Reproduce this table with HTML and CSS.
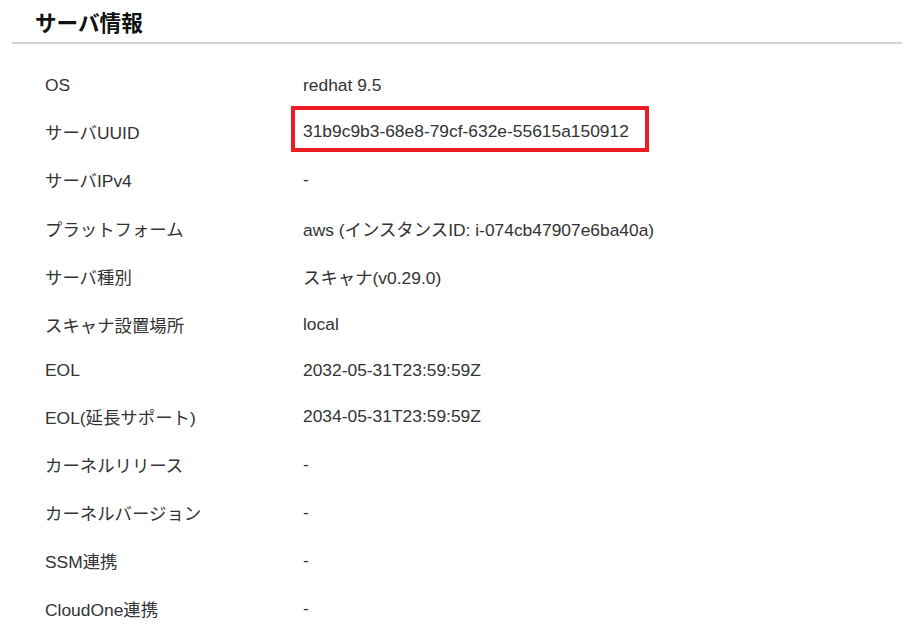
FILE: index.html
```html
<!DOCTYPE html>
<html lang="ja">
<head>
  <meta charset="UTF-8" />
  <title>サーバ情報</title>
  <link rel="stylesheet" href="styles.css">
</head>
<body>

  <div class="server_info">
    <h2 class="section_title">サーバ情報</h2>

    <table class="info_table">
      <tr><th>OS</th><td>redhat 9.5</td></tr>
      <tr><th>サーバUUID</th><td><span class="highlight">31b9c9b3-68e8-79cf-632e-55615a150912</span></td></tr>
      <tr><th>サーバIPv4</th><td>-</td></tr>
      <tr><th>プラットフォーム</th><td>aws (インスタンスID: i-074cb47907e6ba40a)</td></tr>
      <tr><th>サーバ種別</th><td>スキャナ(v0.29.0)</td></tr>
      <tr><th>スキャナ設置場所</th><td>local</td></tr>
      <tr><th>EOL</th><td>2032-05-31T23:59:59Z</td></tr>
      <tr><th>EOL(延長サポート)</th><td>2034-05-31T23:59:59Z</td></tr>
      <tr><th>カーネルリリース</th><td>-</td></tr>
      <tr><th>カーネルバージョン</th><td>-</td></tr>
      <tr><th>SSM連携</th><td>-</td></tr>
      <tr><th>CloudOne連携</th><td>-</td></tr>
    </table>
  </div>

</body>
</html>
```

FILE: styles.css
```css
body {
  margin: 0;
  padding: 0;
  background-color: #fff;
  color: #333;
  font-family: "Liberation Sans", Arial, "Noto Sans CJK JP", sans-serif;
}

.server_info {
  margin: 0 14px 0 12px;
}

.section_title {
  margin: 0;
  padding: 6px 0 5px 23px;
  font-size: 21.6px;
  font-weight: bold;
  color: #111;
  border-bottom: 2px solid #d3d3d3;
}

.info_table {
  margin: 20px 0 0 33px;
  border-collapse: collapse;
  font-size: 17.4px;
}

.info_table th,
.info_table td {
  padding: 11.3px 0 11.8px 0;
  text-align: left;
  font-weight: normal;
  vertical-align: middle;
}

.info_table th {
  width: 258px;
}

/* red marker around the UUID */
.highlight {
  position: relative;
}

.highlight::after {
  content: "";
  position: absolute;
  top: -15px;
  bottom: -11px;
  left: -12px;
  right: -20px;
  border: 4px solid #ed1c24;
}
```
